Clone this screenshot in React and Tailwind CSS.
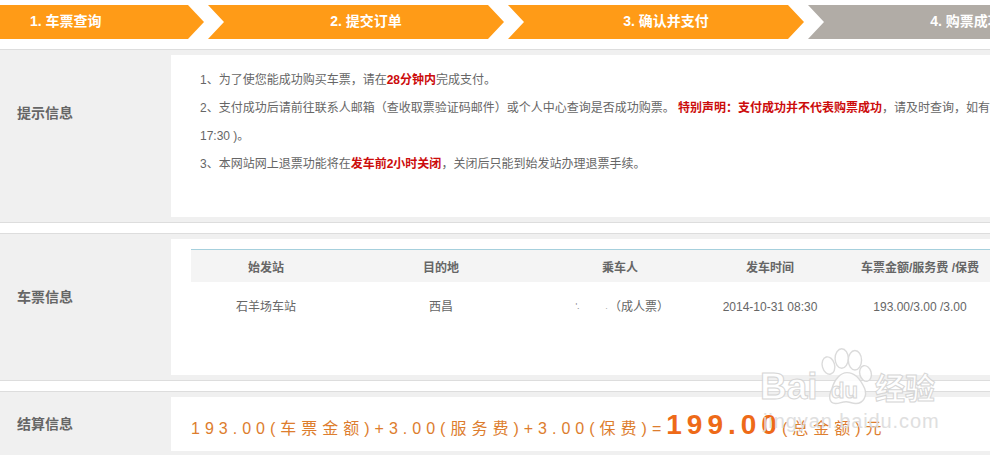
const FONT = "font-['Liberation_Sans','Noto_Sans_CJK_SC',sans-serif]";

function Step({ className, children }) {
  return (
    <div className={`h-[34px] shrink-0 flex items-center pb-[1px] text-white text-[14px] font-bold ${className}`}>
      {children}
    </div>
  );
}

function Section({ label, labelPad, panelClass, children }) {
  return (
    <section className="flex border-y border-[#dddddd] bg-[#f0f0f0] py-[5px]">
      <div className="w-[171px] shrink-0 pl-[17px]">
        <div className={`text-[14px] leading-[20px] font-bold text-[#666666] ${labelPad}`}>{label}</div>
      </div>
      <div className={`w-[819px] shrink-0 bg-white overflow-hidden ${panelClass}`}>{children}</div>
    </section>
  );
}

const Red = ({ children }) => <b className="text-[#cc0c0c]">{children}</b>;
const cols = "grid grid-cols-[150px_200px_158px_142px_158px] w-[808px]";

function Watermark() {
  const stroke = "text-white [-webkit-text-stroke:1px_#d2d2d2]";
  return (
    <div className="absolute left-[755px] top-[345px] w-[190px] h-[95px] pointer-events-none opacity-90">
      <svg className="absolute left-[64px] top-[2px]" width="56" height="60" viewBox="0 0 62 68" fill="none" stroke="#d8d8d8" strokeWidth="1.6">
        <ellipse cx="10" cy="21" rx="7" ry="10" fill="#fff" transform="rotate(-15 10 21)" />
        <ellipse cx="25" cy="13" rx="7.5" ry="11" fill="#fff" />
        <ellipse cx="40" cy="15" rx="7.5" ry="11" fill="#fff" />
        <ellipse cx="52" cy="30" rx="6.5" ry="9" fill="#fff" transform="rotate(-15 52 30)" />
        <path d="M14 47C17 36 24 29 31 29C40 29 47 38 51 47C54 55 50 64 41 64C36 64 34 62 30 62C25 62 23 64 18 64C10 64 10 55 14 47Z" fill="#fff" />
      </svg>
      <div className={`absolute left-[5px] top-[22px] text-[37px] leading-[40px] font-bold ${stroke}`}>Bai</div>
      <div className={`absolute left-[76px] top-[34px] text-[22px] leading-[24px] font-bold ${stroke}`}>du</div>
      <div className={`absolute left-[120px] top-[27px] text-[30px] leading-[34px] font-bold whitespace-nowrap ${stroke}`}>经验</div>
      <div className="absolute left-[8px] top-[65px] text-[20px] leading-[22px] text-[#dcdcdc] tracking-[0.9px] whitespace-nowrap">jingyan.baidu.com</div>
    </div>
  );
}

export default function App() {
  return (
    <div className={`relative w-[990px] h-[455px] overflow-hidden bg-white text-[12px] text-[#666666] ${FONT}`}>
      <div className="flex gap-1 pt-[5px] pb-[10px] w-[1200px]">
        <Step className="w-[204px] pl-[30px] bg-[#ff9b17] [clip-path:polygon(0_0,188px_0,204px_17px,188px_34px,0_34px)]">1. 车票查询</Step>
        <Step className="w-[296px] pl-[20px] justify-center bg-[#ff9b17] [clip-path:polygon(0_0,280px_0,296px_17px,280px_34px,0_34px,16px_17px)]">2. 提交订单</Step>
        <Step className="w-[296px] pl-[20px] justify-center bg-[#ff9b17] [clip-path:polygon(0_0,280px_0,296px_17px,280px_34px,0_34px,16px_17px)]">3. 确认并支付</Step>
        <Step className="w-[296px] pl-[20px] justify-center bg-[#b1aca6] [clip-path:polygon(0_0,280px_0,296px_17px,280px_34px,0_34px,16px_17px)]">4. 购票成功</Step>
      </div>

      <Section label="提示信息" labelPad="pt-[48px]" panelClass="h-[162px] pt-[10px] pl-[29px]">
        <div className="leading-[28px] whitespace-nowrap pt-[1px]">
          <p>1、为了使您能成功购买车票，请在<Red>28分钟内</Red>完成支付。</p>
          <p>2、支付成功后请前往联系人邮箱（查收取票验证码邮件）或个人中心查询是否成功购票。 <Red>特别声明：支付成功并不代表购票成功</Red>，请及时查询，如有疑问请联系客服（8:30-</p>
          <p>17:30 )。</p>
          <p>3、本网站网上退票功能将在<Red>发车前2小时关闭</Red>，关闭后只能到始发站办理退票手续。</p>
        </div>
      </Section>

      <div className="h-[10px]" />

      <Section label="车票信息" labelPad="pt-[48px]" panelClass="h-[136px] pt-[10px] pl-[20px]">
        <div className={`${cols} border-t border-[#a6d0dd] bg-[#f4f4f4] h-[33px] pt-[3px] items-center text-center font-bold`}>
          <div>始发站</div>
          <div>目的地</div>
          <div>乘车人</div>
          <div>发车时间</div>
          <div className="whitespace-nowrap">车票金额/服务费 /保费</div>
        </div>
        <div className={`${cols} h-[48px] pt-[1px] items-center text-center`}>
          <div>石羊场车站</div>
          <div>西昌</div>
          <div className="flex items-center pl-[32px] whitespace-nowrap">
            <span className="w-[9px] h-[9px] text-[9px] leading-[9px] text-[#888888]">'.</span>
            <span className="w-[22px]" />
            <span className="w-[5px] text-[9px] text-[#aaaaaa]">.</span>
            <span>（成人票）</span>
          </div>
          <div>2014-10-31 08:30</div>
          <div>193.00/3.00 /3.00</div>
        </div>
      </Section>

      <div className="h-[10px]" />

      <Section label="结算信息" labelPad="pt-[17px]" panelClass="h-[54px] pl-[20px]">
        <div className="flex items-baseline whitespace-nowrap text-[16px] tracking-[5px] text-[#dd7d2e] h-[54px] pt-[12px]">
          <span>193.00(车票金额)+3.00(服务费)+3.00(保费)=</span>
          <span className="text-[28px] leading-[32px] font-bold text-[#ee6a18]">199.00</span>
          <span>(总金额)元</span>
        </div>
      </Section>

      <Watermark />
    </div>
  );
}
